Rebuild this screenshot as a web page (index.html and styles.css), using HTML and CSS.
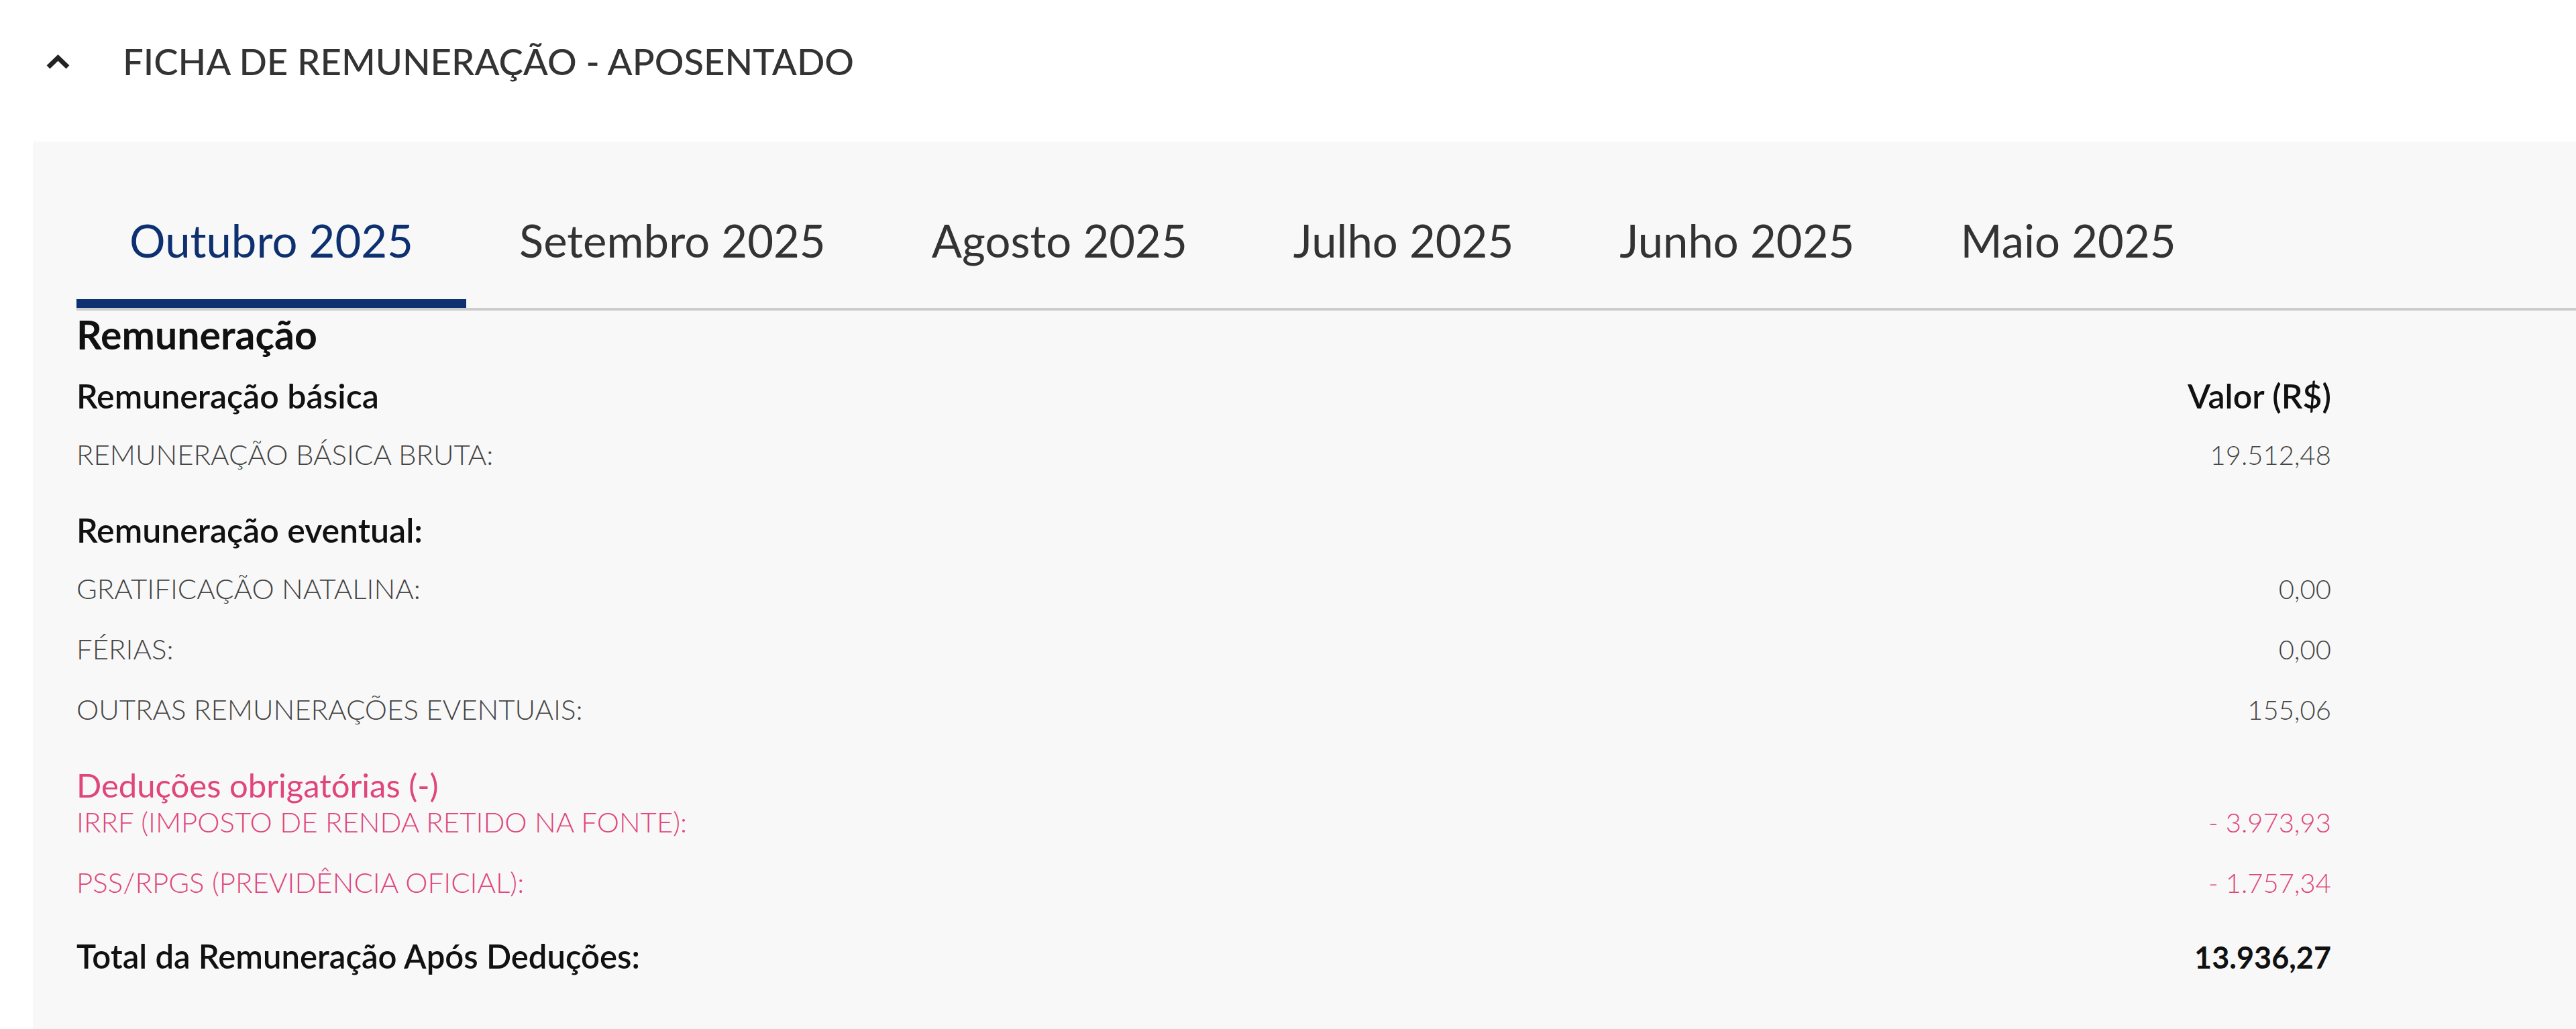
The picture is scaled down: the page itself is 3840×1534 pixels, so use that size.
FILE: index.html
```html
<!DOCTYPE html>
<html>
<head>
	<meta charset="utf-8">
	<title>Ficha de Remuneração</title>
	<link rel="stylesheet" href="styles.css">
</head>
<body>

	<div class="header">
		<svg class="chevron" viewBox="0 0 37 22" width="37" height="22">
			<path d="M4 19 L18.5 5 L33 19" fill="none" stroke="#222" stroke-width="7"/>
		</svg>
		<span class="header_title">FICHA DE REMUNERAÇÃO - APOSENTADO</span>
	</div>

	<div class="panel">
		<ul class="tabs">
			<li class="tab active">Outubro 2025</li>
			<li class="tab">Setembro 2025</li>
			<li class="tab">Agosto 2025</li>
			<li class="tab">Julho 2025</li>
			<li class="tab">Junho 2025</li>
			<li class="tab">Maio 2025</li>
		</ul>

		<div class="content">
			<div class="section_title">Remuneração</div>

			<div class="row sub first">
				<span>Remuneração básica</span>
				<span>Valor (R$)</span>
			</div>
			<div class="row item">
				<span>REMUNERAÇÃO BÁSICA BRUTA:</span>
				<span class="value">19.512,48</span>
			</div>

			<div class="row sub">
				<span>Remuneração eventual:</span>
			</div>
			<div class="row item">
				<span>GRATIFICAÇÃO NATALINA:</span>
				<span class="value">0,00</span>
			</div>
			<div class="row item">
				<span>FÉRIAS:</span>
				<span class="value">0,00</span>
			</div>
			<div class="row item">
				<span>OUTRAS REMUNERAÇÕES EVENTUAIS:</span>
				<span class="value">155,06</span>
			</div>

			<div class="row deductions_title">
				<span>Deduções obrigatórias (-)</span>
			</div>
			<div class="row item deduction first_deduction">
				<span>IRRF (IMPOSTO DE RENDA RETIDO NA FONTE):</span>
				<span class="value">- 3.973,93</span>
			</div>
			<div class="row item deduction">
				<span>PSS/RPGS (PREVIDÊNCIA OFICIAL):</span>
				<span class="value">- 1.757,34</span>
			</div>

			<div class="row total">
				<span>Total da Remuneração Após Deduções:</span>
				<span class="value">13.936,27</span>
			</div>
		</div>
	</div>

</body>
</html>
```

FILE: styles.css
```css
body {
	margin: 0;
	font-family: Lato, "Noto Sans", sans-serif;
	background-color: #fff;
	color: #333;
}

.header {
	display: flex;
	align-items: center;
	height: 184px;
	margin-bottom: 27px;
	padding-left: 68px;
}

.chevron {
	margin-right: 78px;
}

.header_title {
	font-size: 54.5px;
	font-weight: 500;
	line-height: 1.2;
	color: #333;
}

.panel {
	margin-left: 49px;
	background-color: #f8f8f8;
	min-height: calc(100vh - 211px);
}

.tabs {
	display: flex;
	list-style: none;
	margin: 0 0 0 65px;
	padding: 107px 0 0 0;
	border-bottom: 4px solid #ccc;
}

.tab {
	padding: 0 79px 48px 79px;
	font-size: 67px;
	line-height: 1.2;
	color: #333;
	border-bottom: 13px solid transparent;
	border-radius: 3px 3px 0 0;
	cursor: pointer;
}

.tab.active {
	color: #0d3070;
	border-bottom-color: #0d3070;
}

.content {
	padding: 0 365px 0 65px;
}

.section_title {
	margin-top: 1px;
	font-size: 59px;
	font-weight: 700;
	line-height: 1.2;
	color: #111;
}

.row {
	display: flex;
	justify-content: space-between;
	align-items: baseline;
	line-height: 1.2;
}

.sub {
	margin-top: 57px;
	font-size: 50px;
	font-weight: 600;
	color: #111;
}

.sub.first {
	margin-top: 25px;
}

.item {
	margin-top: 40px;
	font-size: 42px;
	font-weight: 300;
	color: #444;
}

.sub + .item {
	margin-top: 32px;
}

.value {
	font-size: 40px;
	font-weight: 300;
	color: #444;
}

.deductions_title {
	margin-top: 58px;
	font-size: 49px;
	font-weight: 400;
	color: #e0457b;
}

.deduction,
.deduction .value {
	color: #e0457b;
}

.first_deduction {
	margin-top: 0;
}

.total {
	margin-top: 56px;
	font-size: 49px;
	font-weight: 600;
	color: #111;
}

.total .value {
	font-size: 45px;
	font-weight: 700;
	color: #111;
}
```
